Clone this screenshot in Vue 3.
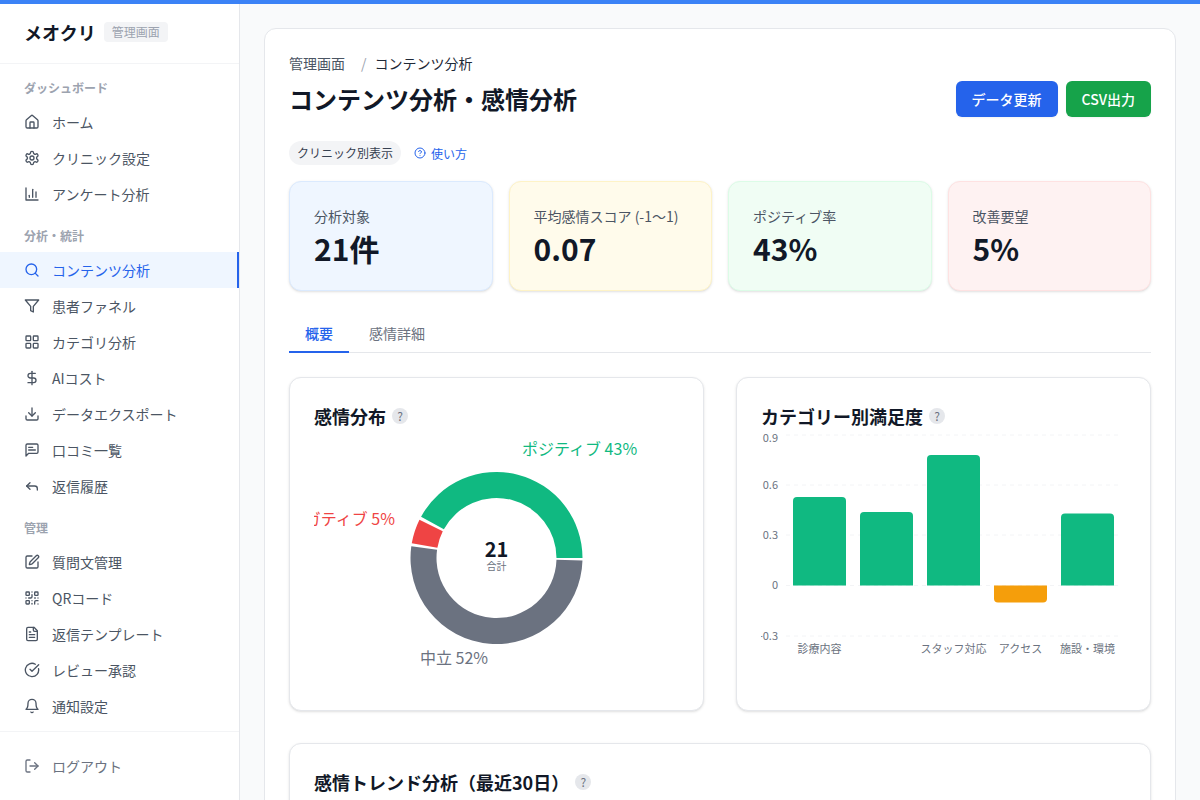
<template>
  <div class="page">
    <div class="top-line"></div>
    <div class="layout">
      <aside class="sidebar">
        <div class="brand">
          <span class="brand-name">メオクリ</span>
          <span class="brand-badge">管理画面</span>
        </div>
        <nav class="nav">
          <div v-for="group in navGroups" :key="group.label" class="nav-group">
            <div class="nav-label">{{ group.label }}</div>
            <a
              v-for="item in group.items"
              :key="item.text"
              class="nav-item"
              :class="{ active: item.active }"
            >
              <svg class="nav-icon" viewBox="0 0 24 24" v-html="icons[item.icon]"></svg>
              <span>{{ item.text }}</span>
            </a>
          </div>
        </nav>
        <div class="sidebar-foot">
          <a class="nav-item logout">
            <svg class="nav-icon" viewBox="0 0 24 24" v-html="icons.logout"></svg>
            <span>ログアウト</span>
          </a>
        </div>
      </aside>

      <main class="main">
        <section class="panel">
          <div class="crumbs">
            <span>管理画面</span>
            <span class="crumb-sep">/</span>
            <span class="crumb-current">コンテンツ分析</span>
          </div>
          <div class="head-row">
            <h1>コンテンツ分析・感情分析</h1>
            <div class="head-actions">
              <button class="btn btn-blue">データ更新</button>
              <button class="btn btn-green">CSV出力</button>
            </div>
          </div>
          <div class="meta-row">
            <span class="pill">クリニック別表示</span>
            <a class="howto">
              <svg class="howto-icon" viewBox="0 0 24 24" v-html="icons.help"></svg>
              使い方
            </a>
          </div>

          <div class="stats">
            <div v-for="s in stats" :key="s.label" class="stat" :class="s.tone">
              <div class="stat-label">{{ s.label }}</div>
              <div class="stat-value">{{ s.value }}</div>
            </div>
          </div>

          <div class="tabs">
            <span class="tab active">概要</span>
            <span class="tab">感情詳細</span>
          </div>

          <div class="chart-grid">
            <div class="chart-card">
              <div class="card-title">感情分布 <span class="q">?</span></div>
              <svg class="chart" viewBox="0 0 365 256">
                <path v-for="seg in donut" :key="seg.name" :d="seg.d" :fill="seg.color" />
                <text x="182.5" y="122" class="donut-num" text-anchor="middle" dominant-baseline="middle">21</text>
                <text x="182.5" y="137" class="donut-sub" text-anchor="middle" dominant-baseline="middle">合計</text>
                <text x="208" y="21" class="donut-label" fill="#10b981" dominant-baseline="middle">ポジティブ 43%</text>
                <text x="81" y="91" class="donut-label" fill="#ef4444" text-anchor="end" dominant-baseline="middle">ネガティブ 5%</text>
                <text x="106" y="230" class="donut-label" fill="#6b7280" dominant-baseline="middle">中立 52%</text>
              </svg>
            </div>

            <div class="chart-card">
              <div class="card-title">カテゴリー別満足度 <span class="q">?</span></div>
              <svg class="chart" viewBox="0 0 365 256">
                <g v-for="t in ticks" :key="t.label">
                  <line x1="25" x2="358" :y1="t.y" :y2="t.y" stroke="#f3f4f6" stroke-dasharray="4 4" />
                  <text x="17" :y="t.ly" class="axis" text-anchor="end" dominant-baseline="middle">{{ t.label }}</text>
                </g>
                <path v-for="b in bars" :key="b.x" :d="b.d" :fill="b.color" />
                <text
                  v-for="l in barLabels"
                  :key="l.text"
                  :x="l.x"
                  y="220"
                  class="axis"
                  text-anchor="middle"
                  dominant-baseline="middle"
                >{{ l.text }}</text>
              </svg>
            </div>
          </div>

          <div class="trend-card">
            <div class="card-title">感情トレンド分析（最近30日） <span class="q">?</span></div>
          </div>
        </section>
      </main>
    </div>
  </div>
</template>

<script setup>
const icons = {
  home: '<path d="M15 21v-8a1 1 0 0 0-1-1h-4a1 1 0 0 0-1 1v8"/><path d="M3 10a2 2 0 0 1 .709-1.528l7-5.999a2 2 0 0 1 2.582 0l7 5.999A2 2 0 0 1 21 10v9a2 2 0 0 1-2 2H5a2 2 0 0 1-2-2z"/>',
  settings: '<path d="M12.22 2h-.44a2 2 0 0 0-2 2v.18a2 2 0 0 1-1 1.73l-.43.25a2 2 0 0 1-2 0l-.15-.08a2 2 0 0 0-2.73.73l-.22.38a2 2 0 0 0 .73 2.73l.15.1a2 2 0 0 1 1 1.72v.51a2 2 0 0 1-1 1.74l-.15.09a2 2 0 0 0-.73 2.73l.22.38a2 2 0 0 0 2.73.73l.15-.08a2 2 0 0 1 2 0l.43.25a2 2 0 0 1 1 1.73V20a2 2 0 0 0 2 2h.44a2 2 0 0 0 2-2v-.18a2 2 0 0 1 1-1.73l.43-.25a2 2 0 0 1 2 0l.15.08a2 2 0 0 0 2.73-.73l.22-.39a2 2 0 0 0-.73-2.73l-.15-.08a2 2 0 0 1-1-1.74v-.5a2 2 0 0 1 1-1.74l.15-.09a2 2 0 0 0 .73-2.73l-.22-.38a2 2 0 0 0-2.73-.73l-.15.08a2 2 0 0 1-2 0l-.43-.25a2 2 0 0 1-1-1.73V4a2 2 0 0 0-2-2z"/><circle cx="12" cy="12" r="3"/>',
  chart: '<path d="M3 3v18h18"/><path d="M18 17V9"/><path d="M13 17V5"/><path d="M8 17v-3"/>',
  search: '<circle cx="11" cy="11" r="8"/><path d="m21 21-4.3-4.3"/>',
  filter: '<polygon points="22 3 2 3 10 12.46 10 19 14 21 14 12.46 22 3"/>',
  grid: '<rect x="3" y="3" width="7" height="7" rx="1"/><rect x="14" y="3" width="7" height="7" rx="1"/><rect x="14" y="14" width="7" height="7" rx="1"/><rect x="3" y="14" width="7" height="7" rx="1"/>',
  dollar: '<line x1="12" y1="2" x2="12" y2="22"/><path d="M17 5H9.5a3.5 3.5 0 0 0 0 7h5a3.5 3.5 0 0 1 0 7H6"/>',
  download: '<path d="M21 15v4a2 2 0 0 1-2 2H5a2 2 0 0 1-2-2v-4"/><polyline points="7 10 12 15 17 10"/><line x1="12" y1="15" x2="12" y2="3"/>',
  message: '<path d="M21 15a2 2 0 0 1-2 2H7l-4 4V5a2 2 0 0 1 2-2h14a2 2 0 0 1 2 2z"/><path d="M13 8H7"/><path d="M17 12H7"/>',
  reply: '<polyline points="9 17 4 12 9 7"/><path d="M20 18v-2a4 4 0 0 0-4-4H4"/>',
  edit: '<path d="M12 3H5a2 2 0 0 0-2 2v14a2 2 0 0 0 2 2h14a2 2 0 0 0 2-2v-7"/><path d="M18.375 2.625a1 1 0 0 1 3 3l-9.013 9.014a2 2 0 0 1-.853.505l-2.873.84a.5.5 0 0 1-.62-.62l.84-2.873a2 2 0 0 1 .506-.852z"/>',
  qr: '<rect x="3" y="3" width="5" height="5" rx="1"/><rect x="16" y="3" width="5" height="5" rx="1"/><rect x="3" y="16" width="5" height="5" rx="1"/><path d="M21 16h-3a2 2 0 0 0-2 2v3"/><path d="M21 21v.01"/><path d="M12 7v3a2 2 0 0 1-2 2H7"/><path d="M3 12h.01"/><path d="M12 3h.01"/><path d="M12 16v.01"/><path d="M16 12h1"/><path d="M21 12v.01"/><path d="M12 21v-1"/>',
  file: '<path d="M15 2H6a2 2 0 0 0-2 2v16a2 2 0 0 0 2 2h12a2 2 0 0 0 2-2V7Z"/><path d="M14 2v4a2 2 0 0 0 2 2h4"/><path d="M10 9H8"/><path d="M16 13H8"/><path d="M16 17H8"/>',
  check: '<path d="M21.801 10A10 10 0 1 1 17 3.335"/><path d="m9 11 3 3L22 4"/>',
  bell: '<path d="M6 8a6 6 0 0 1 12 0c0 7 3 9 3 9H3s3-2 3-9"/><path d="M10.3 21a1.94 1.94 0 0 0 3.4 0"/>',
  logout: '<path d="M9 21H5a2 2 0 0 1-2-2V5a2 2 0 0 1 2-2h4"/><polyline points="16 17 21 12 16 7"/><line x1="21" y1="12" x2="9" y2="12"/>',
  help: '<circle cx="12" cy="12" r="10"/><path d="M9.09 9a3 3 0 0 1 5.83 1c0 2-3 3-3 3"/><path d="M12 17h.01"/>',
};

const navGroups = [
  {
    label: "ダッシュボード",
    items: [
      { text: "ホーム", icon: "home" },
      { text: "クリニック設定", icon: "settings" },
      { text: "アンケート分析", icon: "chart" },
    ],
  },
  {
    label: "分析・統計",
    items: [
      { text: "コンテンツ分析", icon: "search", active: true },
      { text: "患者ファネル", icon: "filter" },
      { text: "カテゴリ分析", icon: "grid" },
      { text: "AIコスト", icon: "dollar" },
      { text: "データエクスポート", icon: "download" },
      { text: "口コミ一覧", icon: "message" },
      { text: "返信履歴", icon: "reply" },
    ],
  },
  {
    label: "管理",
    items: [
      { text: "質問文管理", icon: "edit" },
      { text: "QRコード", icon: "qr" },
      { text: "返信テンプレート", icon: "file" },
      { text: "レビュー承認", icon: "check" },
      { text: "通知設定", icon: "bell" },
    ],
  },
];

const stats = [
  { label: "分析対象", value: "21件", tone: "blue" },
  { label: "平均感情スコア (-1〜1)", value: "0.07", tone: "yellow" },
  { label: "ポジティブ率", value: "43%", tone: "green" },
  { label: "改善要望", value: "5%", tone: "red" },
];

// donut starts at 3 o'clock and runs counter-clockwise, with small gaps between slices
function arc(from, to) {
  const cx = 182.5;
  const cy = 128;
  const R = 86;
  const r = 60;
  const pt = (rad, deg) => {
    const a = (deg * Math.PI) / 180;
    return `${(cx + rad * Math.cos(a)).toFixed(2)} ${(cy - rad * Math.sin(a)).toFixed(2)}`;
  };
  const large = to - from > 180 ? 1 : 0;
  return `M${pt(R, from)}A${R} ${R} 0 ${large} 0 ${pt(R, to)}L${pt(r, to)}A${r} ${r} 0 ${large} 1 ${pt(r, from)}Z`;
}

const donut = [
  { name: "pos", d: arc(0, 151.3), color: "#10b981" },
  { name: "neg", d: arc(153.6, 170.2), color: "#ef4444" },
  { name: "neu", d: arc(172.2, 358.4), color: "#6b7280" },
];

const ticks = [
  { label: "0.9", y: 5, ly: 9 },
  { label: "0.6", y: 55, ly: 56 },
  { label: "0.3", y: 105, ly: 106 },
  { label: "0", y: 155.5, ly: 156.5 },
  { label: "-0.3", y: 206, ly: 207 },
];

const bars = [
  { x: 32, top: 67 },
  { x: 99, top: 82 },
  { x: 166, top: 25 },
  { x: 233, bottom: 172.5 },
  { x: 300, top: 83.5 },
].map((b) => {
  const w = 53;
  if (b.bottom) {
    const y = 155.5;
    return {
      x: b.x,
      color: "#f59e0b",
      d: `M${b.x} ${y}H${b.x + w}V${b.bottom - 4}a4 4 0 0 1-4 4H${b.x + 4}a4 4 0 0 1-4-4Z`,
    };
  }
  return {
    x: b.x,
    color: "#10b981",
    d: `M${b.x} 155.5V${b.top + 4}a4 4 0 0 1 4-4H${b.x + w - 4}a4 4 0 0 1 4 4V155.5Z`,
  };
});

const barLabels = [
  { text: "診療内容", x: 58.5 },
  { text: "スタッフ対応", x: 192.5 },
  { text: "アクセス", x: 259.5 },
  { text: "施設・環境", x: 326.5 },
];
</script>

<style scoped>
.page {
  height: 100vh;
  display: flex;
  flex-direction: column;
  overflow: hidden;
  font-family: "Noto Sans CJK JP", "Noto Sans", sans-serif;
  color: #111827;
  background: #f9fafb;
}
.top-line {
  height: 4px;
  flex: none;
  background: #3b82f6;
}
.layout {
  flex: 1;
  display: flex;
  min-height: 0;
}
.sidebar {
  width: 240px;
  box-sizing: border-box;
  flex: none;
  background: #fff;
  border-right: 1px solid #e5e7eb;
  display: flex;
  flex-direction: column;
}
.brand {
  height: 60px;
  box-sizing: border-box;
  padding: 0 24px 3px;
  display: flex;
  align-items: center;
  gap: 8px;
  border-bottom: 1px solid #f3f4f6;
}
.brand-name {
  font-size: 18px;
  font-weight: 700;
}
.brand-badge {
  font-size: 12px;
  line-height: 20px;
  padding: 0 8px;
  color: #9ca3af;
  background: #f3f4f6;
  border-radius: 4px;
}
.nav {
  padding: 15px 0 7px;
}
.nav-group + .nav-group {
  margin-top: 15px;
}
.nav-label {
  padding: 0 24px;
  height: 18px;
  line-height: 18px;
  margin-bottom: 7px;
  font-size: 12px;
  font-weight: 700;
  color: #9ca3af;
}
.nav-item {
  height: 36px;
  padding: 0 24px;
  display: flex;
  align-items: center;
  gap: 12px;
  font-size: 14px;
  color: #4b5563;
}
.nav-item.active {
  color: #2563eb;
  background: #eff6ff;
  border-right: 2px solid #2563eb;
}
.nav-icon {
  width: 16px;
  height: 16px;
  flex: none;
  fill: none;
  stroke: currentColor;
  stroke-width: 2;
  stroke-linecap: round;
  stroke-linejoin: round;
}
.sidebar-foot {
  border-top: 1px solid #f3f4f6;
  padding-top: 16px;
}
.logout {
  color: #6b7280;
}
.main {
  flex: 1;
  min-width: 0;
  padding: 24px;
  overflow: hidden;
}
.panel {
  background: #fff;
  border: 1px solid #e5e7eb;
  border-radius: 12px;
  padding: 24px;
}
.crumbs {
  display: flex;
  align-items: center;
  font-size: 14px;
  line-height: 20px;
  color: #4b5563;
  margin-bottom: 8px;
}
.crumb-sep {
  margin: 0 8px 0 16px;
  color: #9ca3af;
}
.crumb-current {
  color: #1f2937;
}
.head-row {
  display: flex;
  justify-content: space-between;
  align-items: center;
}
h1 {
  margin: 0;
  font-size: 24px;
  line-height: 36px;
  font-weight: 700;
  color: #111827;
}
.head-actions {
  display: flex;
  gap: 8px;
}
.btn {
  height: 36px;
  padding: 0 16px;
  border: 0;
  border-radius: 6px;
  color: #fff;
  font-family: inherit;
  font-size: 14px;
  font-weight: 500;
  box-shadow: 0 1px 2px rgba(0, 0, 0, 0.05);
}
.btn-blue {
  background: #2563eb;
}
.btn-green {
  background: #16a34a;
}
.meta-row {
  margin-top: 24px;
  display: flex;
  align-items: center;
  gap: 13px;
}
.pill {
  font-size: 12px;
  line-height: 24px;
  padding: 0 8px;
  color: #374151;
  background: #f3f4f6;
  border-radius: 12px;
}
.howto {
  display: flex;
  align-items: center;
  gap: 5px;
  font-size: 12px;
  color: #2563eb;
}
.howto-icon {
  width: 12px;
  height: 12px;
  fill: none;
  stroke: currentColor;
  stroke-width: 2;
  stroke-linecap: round;
  stroke-linejoin: round;
}
.stats {
  margin-top: 16px;
  display: grid;
  grid-template-columns: repeat(4, 1fr);
  gap: 16px;
}
.stat {
  height: 110px;
  box-sizing: border-box;
  padding: 24px;
  border: 1px solid;
  border-radius: 12px;
  box-shadow: 0 1px 3px rgba(0, 0, 0, 0.1), 0 1px 2px -1px rgba(0, 0, 0, 0.1);
}
.stat.blue {
  background: #eff6ff;
  border-color: #dbeafe;
}
.stat.yellow {
  background: #fffbeb;
  border-color: #fef3c7;
}
.stat.green {
  background: #f0fdf4;
  border-color: #dcfce7;
}
.stat.red {
  background: #fef2f2;
  border-color: #fee2e2;
}
.stat-label {
  font-size: 14px;
  line-height: 20px;
  color: #4b5563;
}
.stat-value {
  margin-top: 4px;
  font-size: 30px;
  line-height: 36px;
  font-weight: 700;
  color: #111827;
}
.tabs {
  margin-top: 24px;
  display: flex;
  gap: 4px;
  border-bottom: 1px solid #e5e7eb;
  height: 37px;
}
.tab {
  height: 38px;
  box-sizing: border-box;
  padding: 8px 16px;
  font-size: 14px;
  line-height: 20px;
  color: #6b7280;
  border-bottom: 2px solid transparent;
}
.tab.active {
  color: #2563eb;
  font-weight: 500;
  border-bottom-color: #2563eb;
}
.chart-grid {
  margin-top: 24px;
  display: grid;
  grid-template-columns: 1fr 1fr;
  gap: 32px;
}
.chart-card,
.trend-card {
  background: #fff;
  border: 1px solid #e5e7eb;
  border-radius: 12px;
  padding: 24px;
  box-shadow: 0 1px 3px rgba(0, 0, 0, 0.1), 0 1px 2px -1px rgba(0, 0, 0, 0.1);
}
.trend-card {
  margin-top: 32px;
  height: 300px;
}
.card-title {
  font-size: 18px;
  line-height: 28px;
  font-weight: 700;
  color: #111827;
  display: flex;
  align-items: center;
  gap: 6px;
}
.q {
  width: 16px;
  height: 16px;
  border-radius: 50%;
  background: #e5e7eb;
  color: #6b7280;
  font-size: 12px;
  line-height: 16px;
  font-weight: 400;
  text-align: center;
}
.chart {
  display: block;
  width: 365px;
  height: 256px;
}
.donut-num {
  font-size: 20px;
  font-weight: 700;
  fill: #111827;
}
.donut-sub {
  font-size: 10px;
  fill: #6b7280;
}
.donut-label {
  font-size: 16px;
}
.axis {
  font-size: 11px;
  fill: #6b7280;
}
</style>
